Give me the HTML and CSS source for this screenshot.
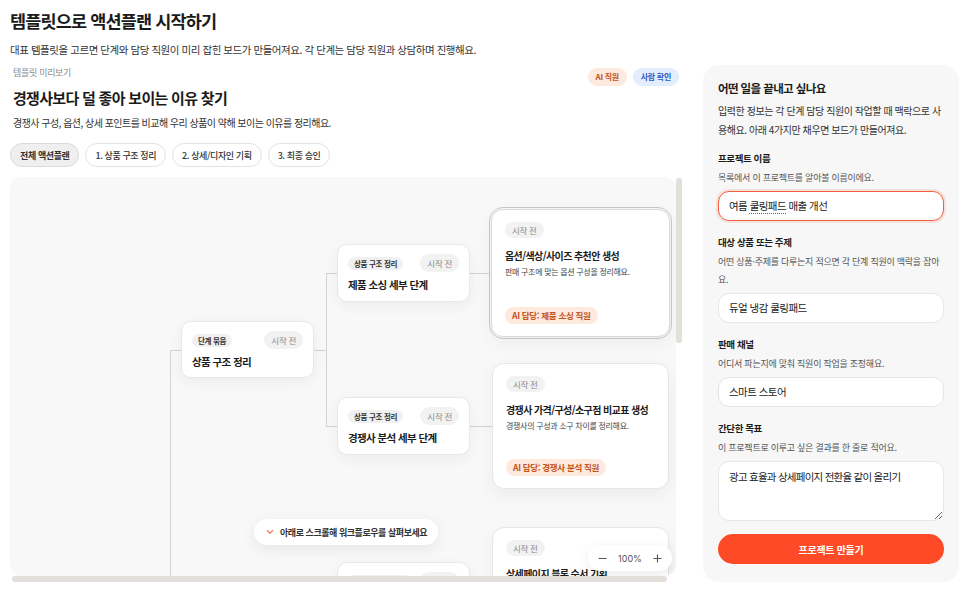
FILE: index.html
```html
<!DOCTYPE html>
<html lang="ko">
<head>
<meta charset="utf-8">
<title>템플릿으로 액션플랜 시작하기</title>
<link rel="stylesheet" href="styles.css">
</head>
<body>
<div class="page">
  <h1 class="page-title">템플릿으로 액션플랜 시작하기</h1>
  <p class="page-sub">대표 템플릿을 고르면 단계와 담당 직원이 미리 잡힌 보드가 만들어져요. 각 단계는 담당 직원과 상담하며 진행해요.</p>

  <div class="main">
    <section class="preview">
      <div class="preview-head">
        <span class="eyebrow">템플릿 미리보기</span>
        <div class="badges">
          <span class="badge badge-ai">AI 직원</span>
          <span class="badge badge-human">사람 확인</span>
        </div>
      </div>
      <h2 class="preview-title">경쟁사보다 덜 좋아 보이는 이유 찾기</h2>
      <p class="preview-desc">경쟁사 구성, 옵션, 상세 포인트를 비교해 우리 상품이 약해 보이는 이유를 정리해요.</p>
      <div class="tabs">
        <button class="tab active">전체 액션플랜</button>
        <button class="tab">1. 상품 구조 정리</button>
        <button class="tab">2. 상세/디자인 기획</button>
        <button class="tab">3. 최종 승인</button>
      </div>

      <div class="board">
        <div class="canvas">
          <span class="edge edge-v e-root"></span>
          <span class="edge edge-h e-root-in"></span>
          <span class="edge edge-h e-a-out"></span>
          <span class="edge edge-v e-split"></span>
          <span class="edge edge-h e-to-b"></span>
          <span class="edge edge-h e-to-c"></span>
          <span class="edge edge-h e-b-d"></span>
          <span class="edge edge-h e-c-e"></span>

          <div class="node n-a">
            <div class="node-top"><span class="tag">단계 묶음</span><span class="status">시작 전</span></div>
            <div class="node-title">상품 구조 정리</div>
          </div>
          <div class="node n-b">
            <div class="node-top"><span class="tag">상품 구조 정리</span><span class="status">시작 전</span></div>
            <div class="node-title">제품 소싱 세부 단계</div>
          </div>
          <div class="node n-c">
            <div class="node-top"><span class="tag">상품 구조 정리</span><span class="status">시작 전</span></div>
            <div class="node-title">경쟁사 분석 세부 단계</div>
          </div>
          <div class="node n-g">
            <div class="node-top"><span class="tag">상세/디자인 기획</span><span class="status">시작 전</span></div>
            <div class="node-title">상세페이지 세부 단계</div>
          </div>

          <div class="card card-d">
            <span class="status">시작 전</span>
            <div class="card-title">옵션/색상/사이즈 추천안 생성</div>
            <div class="card-desc">판매 구조에 맞는 옵션 구성을 정리해요.</div>
            <span class="owner">AI 담당: 제품 소싱 직원</span>
          </div>
          <div class="card card-e">
            <span class="status">시작 전</span>
            <div class="card-title">경쟁사 가격/구성/소구점 비교표 생성</div>
            <div class="card-desc">경쟁사의 구성과 소구 차이를 정리해요.</div>
            <span class="owner">AI 담당: 경쟁사 분석 직원</span>
          </div>
          <div class="card card-f">
            <span class="status">시작 전</span>
            <div class="card-title">상세페이지 블록 순서 기획</div>
            <div class="card-desc">구매 흐름에 맞게 상세 블록을 배치해요.</div>
            <span class="owner">AI 담당: 상세페이지 직원</span>
          </div>

          <div class="scroll-hint">
            <svg class="chev" width="8" height="6" viewBox="0 0 8 6"><path d="M1.2 1.4 L4 4.3 L6.8 1.4" fill="none" stroke="#f0805f" stroke-width="1.3" stroke-linecap="round" stroke-linejoin="round"/></svg>
            <span>아래로 스크롤해 워크플로우를 살펴보세요</span>
          </div>

          <div class="zoom-ctrl">
            <svg width="9" height="9" viewBox="0 0 9 9"><path d="M0.5 4.5 H8.5" stroke="#555" stroke-width="1.1"/></svg>
            <span class="zoom-val">100%</span>
            <svg width="9" height="9" viewBox="0 0 9 9"><path d="M0.5 4.5 H8.5 M4.5 0.5 V8.5" stroke="#555" stroke-width="1.1"/></svg>
          </div>
        </div>
        <span class="thumb-v"></span>
        <span class="thumb-h"></span>
      </div>
    </section>

    <aside class="setup">
      <h3 class="setup-title">어떤 일을 끝내고 싶나요</h3>
      <p class="setup-desc">입력한 정보는 각 단계 담당 직원이 작업할 때 맥락으로 사용해요. 아래 4가지만 채우면 보드가 만들어져요.</p>

      <div class="field">
        <label class="field-label">프로젝트 이름</label>
        <p class="field-hint">목록에서 이 프로젝트를 알아볼 이름이에요.</p>
        <div class="input is-focused">여름 <span class="misspelled">쿨링패드</span> 매출 개선</div>
      </div>

      <div class="field">
        <label class="field-label">대상 상품 또는 주제</label>
        <p class="field-hint">어떤 상품·주제를 다루는지 적으면 각 단계 직원이 맥락을 잡아요.</p>
        <div class="input">듀얼 냉감 쿨링패드</div>
      </div>

      <div class="field">
        <label class="field-label">판매 채널</label>
        <p class="field-hint">어디서 파는지에 맞춰 직원이 작업을 조정해요.</p>
        <div class="input">스마트 스토어</div>
      </div>

      <div class="field">
        <label class="field-label">간단한 목표</label>
        <p class="field-hint">이 프로젝트로 이루고 싶은 결과를 한 줄로 적어요.</p>
        <textarea class="textarea">광고 효율과 상세페이지 전환율 같이 올리기</textarea>
      </div>

      <button class="submit">프로젝트 만들기</button>
    </aside>
  </div>
</div>
</body>
</html>
```

FILE: styles.css
```css
* { box-sizing: border-box; }
html, body { margin: 0; padding: 0; background: #fff; }
body {
  font-family: "Noto Sans CJK KR", "Noto Sans", sans-serif;
  color: #1e1e1e;
}

.page { padding: 8px 7px 0 10px; }

.page-title {
  margin: 0;
  font-size: 17.5px;
  line-height: 26px;
  font-weight: 700;
  letter-spacing: -0.85px;
  color: #1b1b1b;
}
.page-sub {
  margin: 8px 0 0;
  font-size: 10.5px;
  line-height: 16px;
  letter-spacing: -0.45px;
  color: #333;
}

.main { display: flex; gap: 20px; margin-top: 7px; }

/* ---------- preview ---------- */
.preview { width: 673px; flex: none; display: flex; flex-direction: column; }
.preview-head {
  display: flex;
  justify-content: space-between;
  align-items: flex-start;
  height: 21px;
  padding: 0 4px 0 3px;
}
.eyebrow { margin-top: 1px; font-size: 9px; line-height: 14px; color: #8a8a8a; letter-spacing: -0.3px; }
.badges { display: flex; gap: 6px; margin-top: 3px; }
.badge {
  height: 18px;
  line-height: 18px;
  padding: 0 8px;
  border-radius: 9px;
  font-size: 8px;
  font-weight: 700;
  letter-spacing: -0.3px;
}
.badge-ai { background: #fde9dd; color: #c4531c; }
.badge-human { background: #e3edfc; color: #2a5bc6; }

.preview-title {
  margin: 1px 0 0;
  padding-left: 3px;
  font-size: 15px;
  line-height: 22px;
  font-weight: 700;
  letter-spacing: -0.7px;
  color: #1b1b1b;
}
.preview-desc {
  margin: 6px 0 0;
  padding-left: 3px;
  font-size: 10px;
  line-height: 16px;
  letter-spacing: -0.53px;
  color: #333;
}

.tabs { display: flex; gap: 6px; margin-top: 12px; }
.tab {
  height: 24px;
  padding: 0 9px;
  border: 1px solid #e2e2e2;
  border-radius: 12px;
  background: #fff;
  font-family: inherit;
  font-size: 9px;
  font-weight: 500;
  color: #333;
  letter-spacing: -0.4px;
}
.tab.active { background: #efefef; border-color: #dadada; font-weight: 700; }

/* ---------- board / canvas ---------- */
.board { position: relative; margin-top: 10px; width: 672px; height: 405px; }
.canvas {
  position: relative;
  width: 666px;
  height: 399px;
  background: #f8f8f8;
  border-radius: 12px;
  overflow: hidden;
}
.thumb-v {
  position: absolute;
  left: 666px; top: 1px;
  width: 6px; height: 165px;
  border-radius: 3px;
  background: #e3dfda;
}
.thumb-h {
  position: absolute;
  left: 2px; top: 399px;
  width: 655px; height: 6px;
  border-radius: 3px;
  background: #e3dfda;
}

.edge { position: absolute; background: #d3d3d3; }
.edge-v { width: 1px; }
.edge-h { height: 1px; }
.e-root    { left: 160px; top: 173px; height: 230px; }
.e-root-in { left: 160px; top: 173px; width: 11px; }
.e-a-out   { left: 304px; top: 173px; width: 12px; }
.e-split   { left: 316px; top: 96px;  height: 154px; }
.e-to-b    { left: 316px; top: 96px;  width: 11px; }
.e-to-c    { left: 316px; top: 249px; width: 11px; }
.e-b-d     { left: 460px; top: 96px;  width: 20px; }
.e-c-e     { left: 460px; top: 249px; width: 22px; }

.node {
  position: absolute;
  width: 133px;
  height: 58px;
  padding: 9px 10px 0 10px;
  background: #fff;
  border: 1px solid #e8e8e8;
  border-radius: 10px;
  box-shadow: 0 4px 14px rgba(0, 0, 0, 0.05);
}
.n-a { left: 171px; top: 144px; height: 57px; }
.n-b { left: 327px; top: 67px; }
.n-c { left: 327px; top: 220px; }
.n-g { left: 327px; top: 385px; }

.node-top { display: flex; justify-content: space-between; align-items: center; height: 18px; }
.tag {
  height: 13px;
  line-height: 13px;
  padding: 0 6px;
  border-radius: 7px;
  background: #f0f0f0;
  font-size: 7.5px;
  font-weight: 700;
  color: #333;
  letter-spacing: -0.3px;
}
.status {
  height: 18px;
  line-height: 18px;
  padding: 0 7px;
  border-radius: 9px;
  background: #f2f2f2;
  font-size: 8.5px;
  color: #8a8a8a;
  letter-spacing: -0.3px;
}
.node-title {
  margin-top: 6px;
  font-size: 10.5px;
  line-height: 14px;
  font-weight: 700;
  letter-spacing: -0.6px;
  color: #1b1b1b;
}

.card {
  position: absolute;
  width: 177px;
  padding: 12px 13px 12px;
  background: #fff;
  border: 1px solid #e6e6e6;
  border-radius: 12px;
  display: flex;
  flex-direction: column;
  align-items: flex-start;
  box-shadow: 0 6px 18px rgba(0, 0, 0, 0.05);
}
.card .status { height: 16px; line-height: 16px; }
.card-title {
  margin-top: 10px;
  font-size: 10px;
  line-height: 16px;
  font-weight: 700;
  letter-spacing: -0.6px;
  white-space: nowrap;
  color: #1b1b1b;
}
.card-desc {
  margin-top: 1px;
  font-size: 8px;
  line-height: 14px;
  letter-spacing: -0.3px;
  color: #444;
}
.owner {
  margin-top: auto;
  height: 17px;
  line-height: 17px;
  padding: 0 7px;
  border-radius: 9px;
  background: #fde9dd;
  color: #c4531c;
  font-size: 8.5px;
  font-weight: 700;
  letter-spacing: -0.3px;
}
.card-d {
  left: 481px; top: 32px; height: 128px; width: 179px;
  border-color: #d9d9d9;
  outline: 1px solid #c6c6c6;
  outline-offset: 1px;
}
.card-e { left: 482px; top: 186px; height: 126px; }
.card-f { left: 482px; top: 350px; height: 126px; }

.scroll-hint {
  position: absolute;
  left: 244px; top: 342px;
  width: 184px; height: 26px;
  display: flex;
  align-items: center;
  gap: 6px;
  padding-left: 12px;
  background: #fff;
  border-radius: 13px;
  box-shadow: 0 4px 14px rgba(0, 0, 0, 0.08);
  font-size: 9px;
  font-weight: 700;
  color: #333;
  letter-spacing: -0.45px;
}

.zoom-ctrl {
  position: absolute;
  left: 578px; top: 368px;
  width: 84px; height: 26px;
  display: flex;
  align-items: center;
  justify-content: space-between;
  padding: 0 10px;
  background: #fff;
  border-radius: 13px;
  box-shadow: 0 4px 14px rgba(0, 0, 0, 0.08);
}
.zoom-val { font-size: 9px; color: #555; font-family: "Inter", "Noto Sans", sans-serif; }

/* ---------- setup panel ---------- */
.setup {
  flex: none;
  width: 256px;
  background: #f7f7f7;
  border-radius: 16px;
  padding: 14px 15px 0;
}
.setup-title {
  margin: 0;
  font-size: 11.5px;
  line-height: 18px;
  font-weight: 700;
  letter-spacing: -0.6px;
  color: #1b1b1b;
}
.setup-desc {
  margin: 4px 0 0;
  font-size: 10px;
  line-height: 19px;
  letter-spacing: -0.44px;
  color: #333;
}
.field { margin-top: 11px; display: flex; flex-direction: column; }
.field + .field { margin-top: 13px; }
.field-label {
  font-size: 9.5px;
  line-height: 16px;
  font-weight: 700;
  letter-spacing: -0.4px;
  color: #1b1b1b;
}
.field-hint {
  margin: 3px 0 0;
  font-size: 9px;
  line-height: 18px;
  letter-spacing: -0.25px;
  color: #555;
}
.input {
  margin-top: 4px;
  height: 30px;
  line-height: 28px;
  padding: 0 10px;
  background: #fff;
  border: 1px solid #e6e6e6;
  border-radius: 11px;
  font-size: 10.5px;
  letter-spacing: -0.55px;
  color: #222;
}
.input.is-focused {
  border: 1.5px solid #f2603f;
  box-shadow: 0 0 0 2px rgba(242, 96, 63, 0.14);
  line-height: 27px;
}
.misspelled { text-decoration: underline dotted #e0342a; text-underline-offset: 3px; }
.textarea {
  display: block;
  margin-top: 4px;
  width: 100%;
  height: 60px;
  padding: 7px 10px;
  background: #fff;
  border: 1px solid #e6e6e6;
  border-radius: 11px;
  font-family: inherit;
  font-size: 10.5px;
  line-height: 16px;
  letter-spacing: -0.75px;
  color: #222;
  resize: vertical;
}
.submit {
  display: block;
  width: 100%;
  height: 30px;
  margin-top: 13px;
  border: none;
  border-radius: 15px;
  background: #ff4a27;
  color: #fff;
  font-family: inherit;
  font-size: 10px;
  font-weight: 700;
  letter-spacing: -0.3px;
}
```
